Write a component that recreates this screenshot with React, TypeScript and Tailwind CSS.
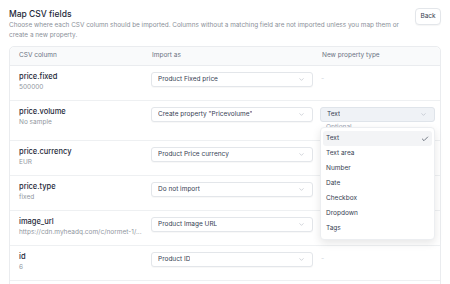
import React from 'react';
import { ChevronDown, Check } from 'lucide-react';

interface Row {
  name: string;
  sample: string;
  importAs: string;
  newType?: boolean;
}

const rows: Row[] = [
  { name: 'price.fixed', sample: '500000', importAs: 'Product Fixed price' },
  { name: 'price.volume', sample: 'No sample', importAs: 'Create property "Pricevolume"', newType: true },
  { name: 'price.currency', sample: 'EUR', importAs: 'Product Price currency' },
  { name: 'price.type', sample: 'fixed', importAs: 'Do not import' },
  { name: 'image_url', sample: 'https://cdn.myheadq.com/c/normet-1/...', importAs: 'Product Image URL' },
  { name: 'id', sample: '6', importAs: 'Product ID' },
];

const typeOptions = ['Text', 'Text area', 'Number', 'Date', 'Checkbox', 'Dropdown', 'Tags'];

const Select = ({ value, open, className }: { value: string; open?: boolean; className: string }) => (
  <div
    className={`flex items-center justify-between h-[15px] rounded-[3px] border pl-[6px] pr-[7px] text-[6.5px] text-gray-700 ${
      open ? 'bg-[#eff2f6] border-[#dfe4ea]' : 'bg-white border-[#e3e6ea] shadow-[0_1px_1px_rgba(0,0,0,0.03)]'
    } ${className}`}
  >
    <span className="truncate">{value}</span>
    <ChevronDown size={7} strokeWidth={1.5} className="text-gray-400 shrink-0" />
  </div>
);

export default function App() {
  return (
    <div className="w-[450px] h-[284px] overflow-hidden bg-white font-['Inter',sans-serif] px-[9px] pt-[8px]">
      <div className="flex justify-between gap-2">
        <div>
          <h2 className="text-[8.5px] leading-[12px] font-medium text-gray-800">Map CSV fields</h2>
          <p className="text-[6.4px] leading-[10px] text-[#8b9099] max-w-[404px]">
            Choose where each CSV column should be imported. Columns without a matching field are not imported unless you map them or create a new property.
          </p>
        </div>
        <button className="h-[17px] w-[26px] shrink-0 rounded-[4px] border border-[#e3e6ea] bg-white text-[6.5px] text-gray-700 shadow-[0_1px_1px_rgba(0,0,0,0.04)]">
          Back
        </button>
      </div>

      <div className="mt-[6px] rounded-t-[5px] border border-[#eaecef]">
        <div className="grid grid-cols-[141px_169px_1fr] h-[19px] items-center bg-[#f9fafb] border-b border-[#eaecef] text-[6.5px] text-gray-500 rounded-t-[5px]">
          <span className="pl-[9px]">CSV column</span>
          <span className="pl-[1px]">Import as</span>
          <span className="pl-[2px]">New property type</span>
        </div>

        {rows.map((r) => (
          <div key={r.name} className="grid grid-cols-[141px_169px_1fr] items-start pt-[6px] pb-[8px] border-b border-[#eef0f2]">
            <div className="pl-[9px] whitespace-nowrap">
              <div className="text-[7.5px] leading-[10px] font-medium text-gray-800">{r.name}</div>
              <div className="text-[6.5px] leading-[10px] text-[#9096a0]">{r.sample}</div>
            </div>
            <Select value={r.importAs} className="w-[162px]" />
            {r.newType ? (
              <div className="relative">
                <Select value="Text" open className="w-[115px]" />
                <div className="text-[6.5px] leading-[10px] text-gray-400 pl-[6px]">Optional</div>
                <div className="absolute left-0 top-[20px] z-10 w-[115px] rounded-[4px] border border-[#eceef1] bg-white p-[2px] py-[3px] shadow-[0_3px_8px_rgba(0,0,0,0.1)]">
                  {typeOptions.map((o, i) => (
                    <div
                      key={o}
                      className={`flex h-[15px] items-center justify-between rounded-[3px] px-[3px] text-[6.5px] text-gray-700 ${
                        i === 0 ? 'bg-[#f3f4f6]' : ''
                      }`}
                    >
                      <span>{o}</span>
                      {i === 0 && <Check size={8} strokeWidth={1.8} className="text-gray-800" />}
                    </div>
                  ))}
                </div>
              </div>
            ) : (
              <div className="h-[15px] flex items-center pl-[1px] text-[7px] text-gray-300">-</div>
            )}
          </div>
        ))}
        <div className="h-[20px]" />
      </div>
    </div>
  );
}
